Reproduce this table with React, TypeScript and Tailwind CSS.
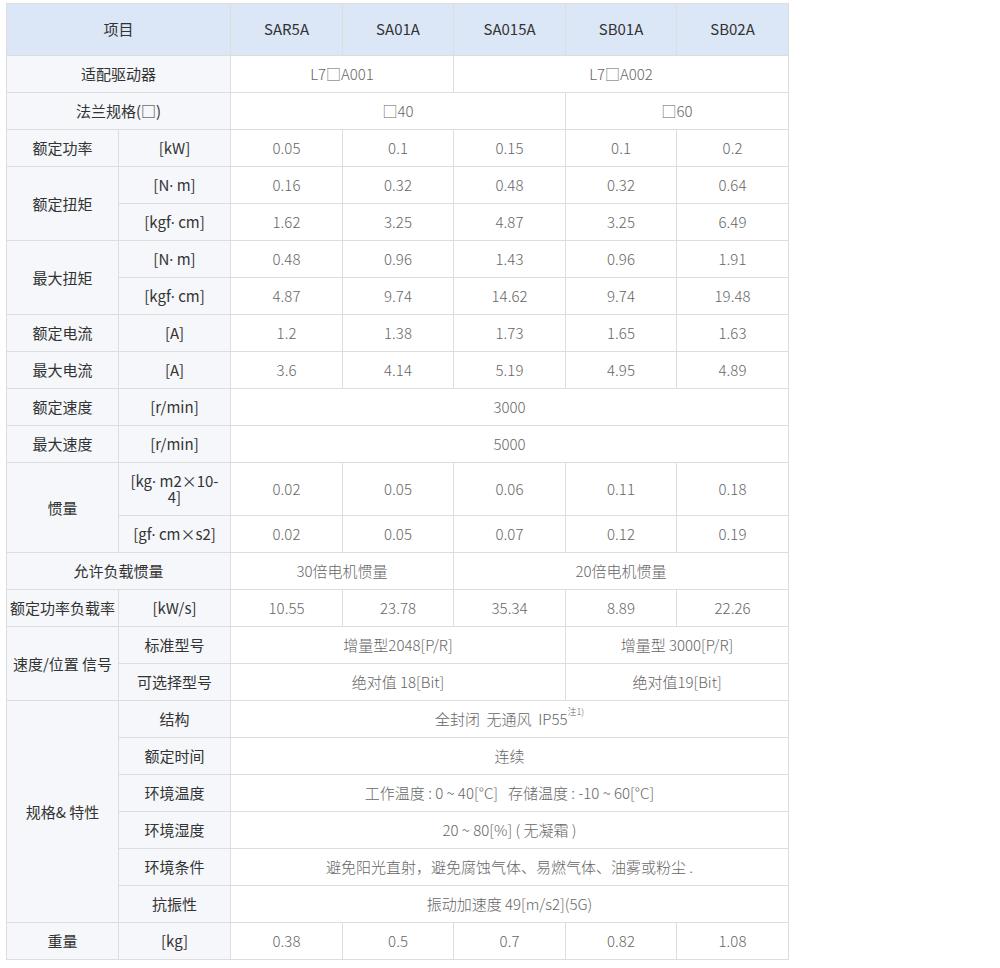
import type { ReactNode } from 'react'

const font = { fontFamily: '"Noto Sans CJK SC", "Noto Sans", sans-serif' }

// narrow latin middle dot, as in the reference
const Dot = () => (
  <span className="inline-block h-[16px] leading-[16px] align-top" style={{ fontFamily: '"Noto Sans", sans-serif' }}>
    ·
  </span>
)

function L({ children, colSpan, rowSpan }: { children: ReactNode; colSpan?: number; rowSpan?: number }) {
  return (
    <td colSpan={colSpan} rowSpan={rowSpan} className="border border-[#dddddd] bg-[#f5f7fa] text-[#333333] h-[37px] px-[3px] py-[10px] leading-[16px] text-center">
      {children}
    </td>
  )
}

function D({ children, colSpan }: { children: ReactNode; colSpan?: number }) {
  return (
    <td colSpan={colSpan} className="border border-[#dddddd] bg-white text-[#666666] font-light h-[37px] px-[3px] py-[10px] leading-[16px] text-center">
      {children}
    </td>
  )
}

function Row({ label, unit, values }: { label?: string; unit: ReactNode; values: string[] }) {
  return (
    <>
      {label && <L>{label}</L>}
      <L>{unit}</L>
      {values.map((v, i) => (
        <D key={i}>{v}</D>
      ))}
    </>
  )
}

export default function App() {
  return (
    <div className="min-h-[968px] bg-white pt-[3px] pl-[6px]" style={font}>
      <table className="table-fixed border-collapse w-[782px] text-[15px]">
        <colgroup>
          <col className="w-[112px]" />
          <col className="w-[112px]" />
          <col className="w-[112px]" />
          <col className="w-[111px]" />
          <col className="w-[112px]" />
          <col className="w-[111px]" />
          <col className="w-[112px]" />
        </colgroup>
        <tbody>
          {/* header */}
          <tr>
            <td colSpan={2} className="border border-[#dddddd] bg-[#dbe6f6] text-[#333333] h-[52px] text-center">项目</td>
            {['SAR5A', 'SA01A', 'SA015A', 'SB01A', 'SB02A'].map((m) => (
              <td key={m} className="border border-[#dddddd] bg-[#dbe6f6] text-[#333333] h-[52px] text-center">{m}</td>
            ))}
          </tr>
          <tr>
            <L colSpan={2}>适配驱动器</L>
            <D colSpan={2}>L7□A001</D>
            <D colSpan={3}>L7□A002</D>
          </tr>
          <tr>
            <L colSpan={2}>法兰规格(□)</L>
            <D colSpan={3}>□40</D>
            <D colSpan={2}>□60</D>
          </tr>
          <tr>
            <Row label="额定功率" unit="[kW]" values={['0.05', '0.1', '0.15', '0.1', '0.2']} />
          </tr>
          <tr>
            <L rowSpan={2}>额定扭矩</L>
            <Row unit={<>[N<Dot /> m]</>} values={['0.16', '0.32', '0.48', '0.32', '0.64']} />
          </tr>
          <tr>
            <Row unit={<>[kgf<Dot /> cm]</>} values={['1.62', '3.25', '4.87', '3.25', '6.49']} />
          </tr>
          <tr>
            <L rowSpan={2}>最大扭矩</L>
            <Row unit={<>[N<Dot /> m]</>} values={['0.48', '0.96', '1.43', '0.96', '1.91']} />
          </tr>
          <tr>
            <Row unit={<>[kgf<Dot /> cm]</>} values={['4.87', '9.74', '14.62', '9.74', '19.48']} />
          </tr>
          <tr>
            <Row label="额定电流" unit="[A]" values={['1.2', '1.38', '1.73', '1.65', '1.63']} />
          </tr>
          <tr>
            <Row label="最大电流" unit="[A]" values={['3.6', '4.14', '5.19', '4.95', '4.89']} />
          </tr>
          <tr>
            <L>额定速度</L>
            <L>[r/min]</L>
            <D colSpan={5}>3000</D>
          </tr>
          <tr>
            <L>最大速度</L>
            <L>[r/min]</L>
            <D colSpan={5}>5000</D>
          </tr>
          <tr>
            <L rowSpan={2}>惯量</L>
            <Row unit={<>[kg<Dot /> m2×10-<br />4]</>} values={['0.02', '0.05', '0.06', '0.11', '0.18']} />
          </tr>
          <tr>
            <Row unit={<>[gf<Dot /> cm×s2]</>} values={['0.02', '0.05', '0.07', '0.12', '0.19']} />
          </tr>
          <tr>
            <L colSpan={2}>允许负载惯量</L>
            <D colSpan={2}>30倍电机惯量</D>
            <D colSpan={3}>20倍电机惯量</D>
          </tr>
          <tr>
            <Row label="额定功率负载率" unit="[kW/s]" values={['10.55', '23.78', '35.34', '8.89', '22.26']} />
          </tr>
          <tr>
            <L rowSpan={2}>速度/位置 信号</L>
            <L>标准型号</L>
            <D colSpan={3}>增量型2048[P/R]</D>
            <D colSpan={2}>增量型 3000[P/R]</D>
          </tr>
          <tr>
            <L>可选择型号</L>
            <D colSpan={3}>绝对值 18[Bit]</D>
            <D colSpan={2}>绝对值19[Bit]</D>
          </tr>
          <tr>
            <L rowSpan={6}>规格&amp; 特性</L>
            <L>结构</L>
            <D colSpan={5}>
              全封闭&nbsp;&nbsp;无通风&nbsp;&nbsp;IP55<sup className="text-[9px] align-[6px]">注1)</sup>
            </D>
          </tr>
          <tr>
            <L>额定时间</L>
            <D colSpan={5}>连续</D>
          </tr>
          <tr>
            <L>环境温度</L>
            <D colSpan={5}>工作温度 : 0 ~ 40[°C]&nbsp;&nbsp;&nbsp;存储温度 : -10 ~ 60[°C]</D>
          </tr>
          <tr>
            <L>环境湿度</L>
            <D colSpan={5}>20 ~ 80[%] ( 无凝霜 )</D>
          </tr>
          <tr>
            <L>环境条件</L>
            <D colSpan={5}>避免阳光直射，避免腐蚀气体、易燃气体、油雾或粉尘 .</D>
          </tr>
          <tr>
            <L>抗振性</L>
            <D colSpan={5}>振动加速度 49[m/s2](5G)</D>
          </tr>
          <tr>
            <Row label="重量" unit="[kg]" values={['0.38', '0.5', '0.7', '0.82', '1.08']} />
          </tr>
        </tbody>
      </table>
    </div>
  )
}
